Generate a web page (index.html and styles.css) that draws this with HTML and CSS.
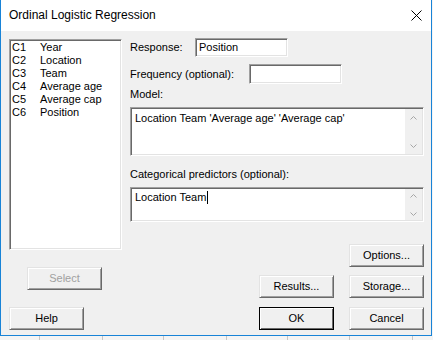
FILE: index.html
```html
<!DOCTYPE html>
<html lang="en">
<head>
  <meta charset="UTF-8" />
  <title>Ordinal Logistic Regression</title>
  <link rel="stylesheet" href="styles.css">
</head>
<body>
  <div class="window">
    <div class="titlebar">
      <span class="title">Ordinal Logistic Regression</span>
      <svg class="close" width="11" height="11" viewBox="0 0 11 11">
        <path d="M0.5 0.5 L10.5 10.5 M10.5 0.5 L0.5 10.5" stroke="#000" stroke-width="1" fill="none"/>
      </svg>
    </div>

    <div class="content">
      <div class="columns">
        <div class="left-col">
          <div class="listbox">
            <div class="item"><span>C1</span><span>Year</span></div>
            <div class="item"><span>C2</span><span>Location</span></div>
            <div class="item"><span>C3</span><span>Team</span></div>
            <div class="item"><span>C4</span><span>Average age</span></div>
            <div class="item"><span>C5</span><span>Average cap</span></div>
            <div class="item"><span>C6</span><span>Position</span></div>
          </div>
          <button class="btn select" disabled>Select</button>
        </div>

        <div class="right-col">
          <div class="field-row">
            <span class="label response-label">Response:</span>
            <div class="entry">Position</div>
          </div>
          <div class="field-row freq-row">
            <span class="label freq-label">Frequency (optional):</span>
            <div class="entry"></div>
          </div>

          <div class="label model-label">Model:</div>
          <div class="textbox model-box">
            <div class="text">Location Team 'Average age' 'Average cap'</div>
            <div class="scroll">
              <svg width="7" height="4" viewBox="0 0 7 4"><polyline points="0.5,3.5 3.5,0.5 6.5,3.5" stroke="#a6a6a6" fill="none"/></svg>
              <svg width="7" height="4" viewBox="0 0 7 4"><polyline points="0.5,0.5 3.5,3.5 6.5,0.5" stroke="#a6a6a6" fill="none"/></svg>
            </div>
          </div>

          <div class="label cat-label">Categorical predictors (optional):</div>
          <div class="textbox cat-box">
            <div class="text">Location Team<span class="caret"></span></div>
            <div class="scroll">
              <svg width="7" height="4" viewBox="0 0 7 4"><polyline points="0.5,3.5 3.5,0.5 6.5,3.5" stroke="#a6a6a6" fill="none"/></svg>
              <svg width="7" height="4" viewBox="0 0 7 4"><polyline points="0.5,0.5 3.5,3.5 6.5,0.5" stroke="#a6a6a6" fill="none"/></svg>
            </div>
          </div>

          <div class="btn-row options-row">
            <button class="btn">Options...</button>
          </div>
          <div class="btn-row results-row">
            <button class="btn">Results...</button>
            <button class="btn">Storage...</button>
          </div>
        </div>
      </div>

      <div class="bottom-row">
        <button class="btn">Help</button>
        <div class="btn-row">
          <button class="btn default">OK</button>
          <button class="btn">Cancel</button>
        </div>
      </div>
    </div>
  </div>

  <div class="sheet">
    <div class="cell c1"></div>
    <div class="cell c2"></div>
    <div class="cell c3"></div>
    <div class="cell c2"></div>
    <div class="cell c3"></div>
    <div class="cell c4"></div>
    <div class="cell c2"></div>
  </div>
</body>
</html>
```

FILE: styles.css
```css
* {
  box-sizing: border-box;
}

body {
  margin: 0;
  background: #f4f4f4;
  font-family: 'Liberation Sans', Arial, sans-serif;
  font-size: 11px;
  line-height: 13px;
  color: #000;
}

.window {
  width: 432px;
  border: 1px solid #1883d7;
  border-top: none;
  background: #f0f0f0;
}

.titlebar {
  height: 31px;
  background: #fff;
  display: flex;
  align-items: center;
  justify-content: space-between;
  padding: 0 9px 0 8px;
}

.title {
  font-size: 12px;
  line-height: 31px;
}

.close {
  display: block;
  margin-top: -1px;
}

.content {
  padding: 7px 7px 5px 8px;
}

.columns {
  display: flex;
  gap: 8px;
}

.left-col {
  width: 113px;
}

.listbox {
  margin-top: 1px;
  height: 211px;
  background: #fff;
  border: 1px solid;
  border-color: #a0a0a0 #fff #fff #a0a0a0;
  box-shadow: inset 1px 1px #696969, inset -1px -1px #e3e3e3;
  padding: 1px 2px;
}

.item {
  display: flex;
  height: 13px;
}

.item span:first-child {
  width: 28px;
}

.right-col {
  width: 294px;
}

.field-row {
  display: flex;
  align-items: center;
  height: 19px;
}

.freq-row {
  margin-top: 7px;
  height: 20px;
}

.response-label {
  width: 65px;
}

.freq-label {
  width: 119px;
}

.entry {
  width: 93px;
  height: 100%;
  background: #fff;
  border: 1px solid;
  border-color: #a0a0a0 #fff #fff #a0a0a0;
  box-shadow: inset 1px 1px #696969, inset -1px -1px #e3e3e3;
  padding: 2px 3px;
}

.model-label {
  margin-top: 4px;
}

.cat-label {
  margin-top: 12px;
}

.textbox {
  display: flex;
  margin-top: 6px;
  background: #fff;
  border: 1px solid;
  border-color: #a0a0a0 #fff #fff #a0a0a0;
  box-shadow: inset 1px 1px #696969, inset -1px -1px #e3e3e3;
  padding: 1px;
}

.model-box {
  height: 49px;
}

.cat-box {
  height: 35px;
}

.textbox .text {
  flex: 1;
  padding: 3px 3px;
}

.cat-box .text {
  padding-top: 2px;
}

.caret {
  display: inline-block;
  width: 1px;
  height: 13px;
  background: #000;
  vertical-align: top;
  margin-left: 1px;
}

.scroll {
  width: 17px;
  background: #f0f0f0;
  display: flex;
  flex-direction: column;
  justify-content: space-between;
  align-items: center;
  padding: 7px 0 6px;
}

.cat-box .scroll {
  padding: 5px 0 4px;
}

.scroll svg {
  display: block;
}

.btn-row {
  display: flex;
  justify-content: flex-end;
  gap: 15px;
}

.options-row {
  margin-top: 22px;
}

.results-row {
  margin-top: 8px;
}

.btn {
  width: 75px;
  height: 23px;
  padding: 0;
  font: inherit;
  color: #000;
  background: #f0f0f0;
  border: 1px solid;
  border-color: #e3e3e3 #696969 #696969 #e3e3e3;
  box-shadow: inset 1px 1px #fff, inset -1px -1px #a0a0a0;
}

.btn.default {
  border-color: #000;
  box-shadow: inset 1px 1px #fff, inset -1px -1px #696969;
}

.select {
  display: block;
  margin: 17px 0 0 18px;
  color: #a0a0a0;
}

.bottom-row {
  display: flex;
  justify-content: space-between;
  margin-top: 9px;
}

.sheet {
  display: flex;
  height: 4px;
}

.cell {
  border-right: 1px solid #c6c6c6;
}

.c1 { width: 40px; }
.c2 { width: 63px; }
.c3 { width: 61px; }
.c4 { width: 62px; }
```
